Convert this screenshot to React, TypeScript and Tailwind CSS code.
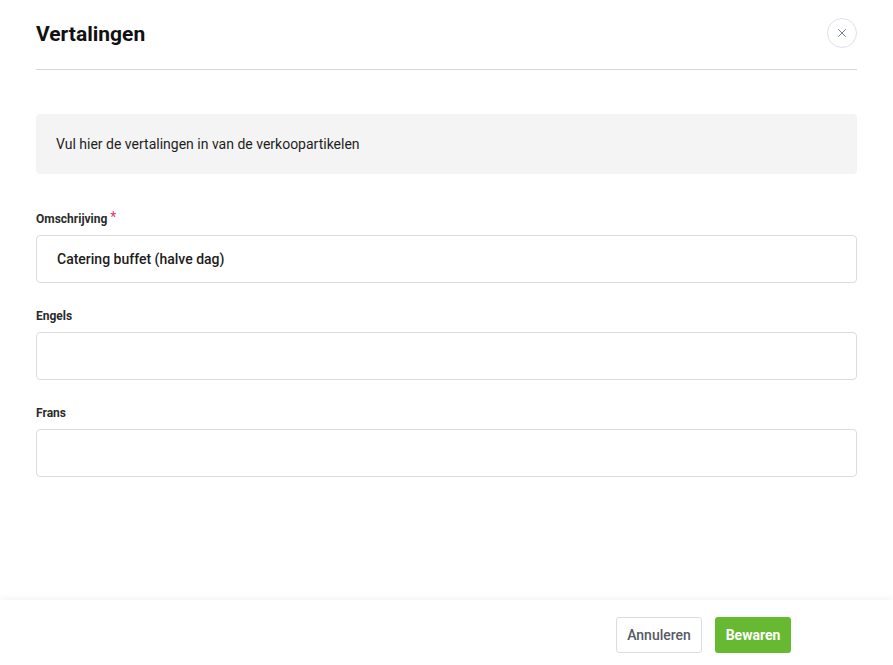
import { X } from "lucide-react";

type FieldProps = {
  label: string;
  value?: string;
  required?: boolean;
};

function Field({ label, value = "", required }: FieldProps) {
  return (
    <div className="flex flex-col">
      <label className="flex h-4 items-center pt-px text-[12px] font-bold leading-4 text-[#2b2b2b]">
        {label}
        {required ? (
          <span className="ml-[3px] -mt-[4px] text-[14px] font-normal text-[#e8365d]">*</span>
        ) : null}
      </label>
      <input
        type="text"
        defaultValue={value}
        className="mt-[9px] h-12 w-full rounded-[4px] border border-[#dcdcdc] bg-white px-5 text-[14px] font-medium text-[#1c1c1c] outline-none"
      />
    </div>
  );
}

export default function App() {
  return (
    <div
      className="flex h-[665px] w-full flex-col bg-white"
      style={{ fontFamily: "Roboto, 'Noto Sans', sans-serif" }}
    >
      <div className="flex-1 px-9">
        <div className="flex h-[70px] items-start justify-between border-b border-[#d6d6d6] pt-[18px]">
          <h1 className="h-[30px] pt-px text-[21px] font-bold leading-[30px] text-[#111]">
            Vertalingen
          </h1>
          <button
            type="button"
            className="flex h-[30px] w-[30px] items-center justify-center rounded-full border border-[#dfe1e7] text-[#5b6f8f]"
          >
            <X className="size-[14px]" strokeWidth={1.5} />
          </button>
        </div>

        <div className="mt-[44px] flex h-[60px] items-center rounded-[4px] bg-[#f4f4f4] px-5 text-[14px] text-[#1e1e1e]">
          Vul hier de vertalingen in van de verkoopartikelen
        </div>

        <div className="mt-9 flex flex-col gap-6">
          <Field label="Omschrijving" value="Catering buffet (halve dag)" required />
          <Field label="Engels" />
          <Field label="Frans" />
        </div>
      </div>

      <div className="flex h-[65px] items-start justify-end gap-[13px] bg-white pt-[17px] pr-[102px] shadow-[0_-3px_6px_rgba(0,0,0,0.035)]">
        <button
          type="button"
          className="h-[36px] w-[86px] rounded-[3px] border border-[#dcdde2] bg-white text-[14px] font-medium text-[#555a66]"
        >
          Annuleren
        </button>
        <button
          type="button"
          className="h-[36px] w-[76px] rounded-[3px] bg-[#67b932] text-[14px] font-bold text-white"
        >
          Bewaren
        </button>
      </div>
    </div>
  );
}
